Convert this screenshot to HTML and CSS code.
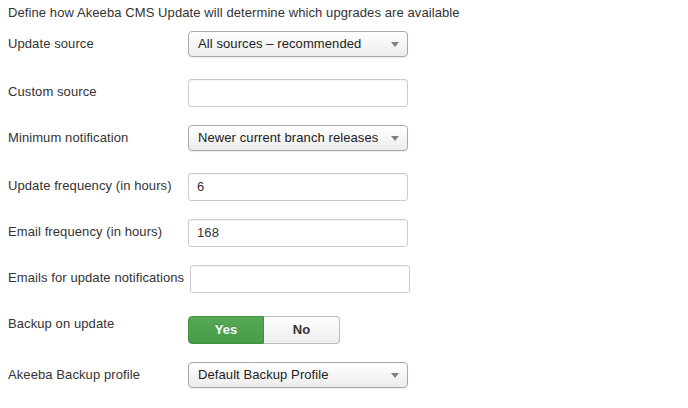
FILE: index.html
```html
<!DOCTYPE html>
<html>
<head>
<meta charset="utf-8">
<link rel="stylesheet" href="styles.css">
</head>
<body>
<div class="page">
  <p class="intro">Define how Akeeba CMS Update will determine which upgrades are available</p>
  <div class="form">
    <div class="row">
      <label class="label">Update source</label>
      <div class="select"><span>All sources – recommended</span><svg class="arrow" width="8" height="5" viewBox="0 0 8 5"><path d="M0 0h8L4 5z"/></svg></div>
    </div>
    <div class="row">
      <label class="label">Custom source</label>
      <div class="input"></div>
    </div>
    <div class="row">
      <label class="label">Minimum notification</label>
      <div class="select"><span>Newer current branch releases</span><svg class="arrow" width="8" height="5" viewBox="0 0 8 5"><path d="M0 0h8L4 5z"/></svg></div>
    </div>
    <div class="row">
      <label class="label">Update frequency (in hours)</label>
      <div class="input">6</div>
    </div>
    <div class="row">
      <label class="label">Email frequency (in hours)</label>
      <div class="input">168</div>
    </div>
    <div class="row">
      <label class="label">Emails for update notifications</label>
      <div class="input"></div>
    </div>
    <div class="row">
      <label class="label">Backup on update</label>
      <div class="toggle"><span class="opt yes">Yes</span><span class="opt no">No</span></div>
    </div>
    <div class="row">
      <label class="label">Akeeba Backup profile</label>
      <div class="select"><span>Default Backup Profile</span><svg class="arrow" width="8" height="5" viewBox="0 0 8 5"><path d="M0 0h8L4 5z"/></svg></div>
    </div>
  </div>
</div>
</body>
</html>
```
FILE: styles.css
```css
* { box-sizing: border-box; }
html, body { margin: 0; padding: 0; background: #fff; }
body {
  font-family: "Liberation Sans", Arial, sans-serif;
  font-size: 13px;
  line-height: 18px;
  letter-spacing: 0.09px;
  color: #333;
}
.page { padding: 4px 8px 0 8px; }
.intro { margin: 0 0 9px 0; }
.row {
  display: flex;
  align-items: flex-start;
  margin-bottom: 18px;
}
.label {
  min-width: 180px;
  padding-top: 4px;
  padding-right: 6px;
  white-space: nowrap;
}
.input {
  width: 220px;
  height: 28px;
  border: 1px solid #ccc;
  border-radius: 3px;
  padding: 4px 8px;
  background: #fff;
  box-shadow: inset 0 1px 1px rgba(0,0,0,0.06);
}
.select {
  width: 220px;
  height: 26px;
  margin-bottom: 4px;
  border: 1px solid #a9a9a9;
  border-radius: 4px;
  background: linear-gradient(#ffffff, #ececec);
  box-shadow: 0 1px 1px rgba(0,0,0,0.08);
  display: flex;
  align-items: center;
  justify-content: space-between;
  padding: 0 8px 0 9px;
  color: #222;
}
.arrow { fill: #808080; margin-top: 1px; }
.toggle {
  display: flex;
  margin-top: 5px;
  height: 28px;
  width: 152px;
  font-weight: bold;
}
.opt {
  display: flex;
  align-items: center;
  justify-content: center;
}
.yes {
  width: 76px;
  color: #fff;
  background: linear-gradient(#55a955, #489c48);
  border: 1px solid #3f8f3f;
  border-radius: 4px 0 0 4px;
  text-shadow: 0 -1px 0 rgba(0,0,0,0.2);
}
.no {
  width: 76px;
  color: #333;
  background: linear-gradient(#ffffff, #ececec);
  border: 1px solid #bbb;
  border-left: none;
  border-radius: 0 4px 4px 0;
}
```
